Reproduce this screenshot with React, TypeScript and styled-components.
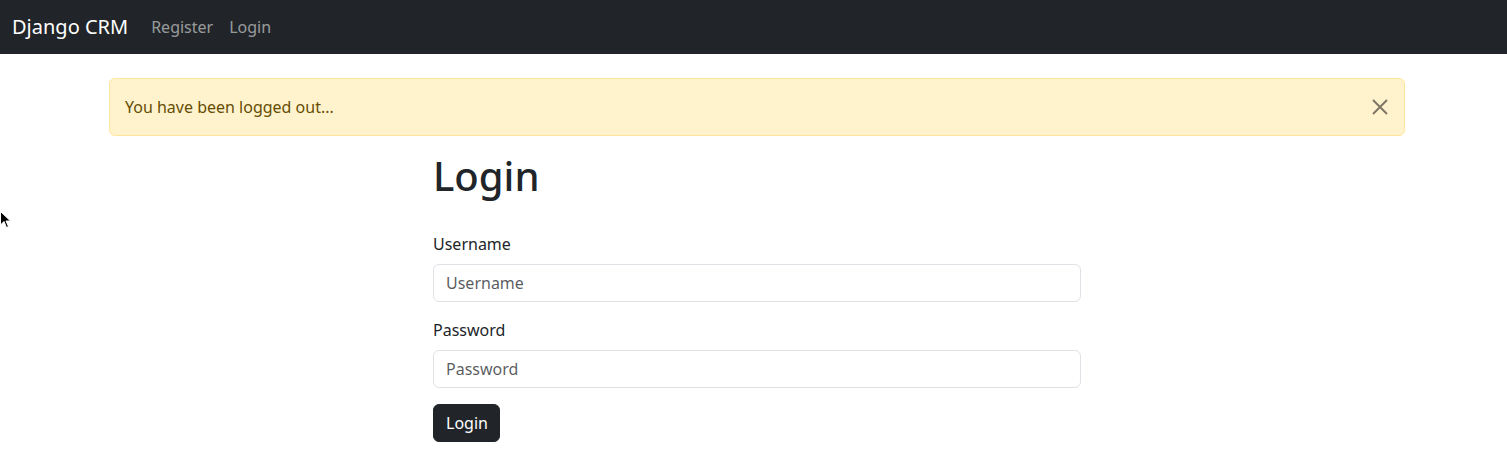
import * as React from "react";
import styled, { createGlobalStyle } from "styled-components";

const GlobalStyle = createGlobalStyle`
  * { box-sizing: border-box; }
  body {
    margin: 0;
    background: #fff;
    color: #212529;
    font-family: "Noto Sans", "Liberation Sans", sans-serif;
    font-size: 16px;
    line-height: 1.5;
  }
`;

const Navbar = styled.nav`
  display: flex;
  align-items: center;
  height: 54px;
  padding: 0 12px;
  background: #212529;
`;

const Brand = styled.a`
  font-size: 20px;
  line-height: 30px;
  color: #fff;
  text-decoration: none;
  margin-right: 15px;
`;

const NavLinks = styled.ul`
  display: flex;
  list-style: none;
  margin: 0;
  padding: 0;
`;

const NavLink = styled.a`
  display: block;
  padding: 8px;
  color: rgba(255, 255, 255, 0.55);
  text-decoration: none;
`;

const Container = styled.main`
  width: 1296px;
  margin: 24px 0 0 109px;
`;

const Alert = styled.div`
  position: relative;
  padding: 16px 48px 16px 15px;
  margin-bottom: 16px;
  background: #fff3cd;
  border: 1px solid #ffe69c;
  border-radius: 6px;
  color: #664d03;
`;

const CloseButton = styled.button`
  position: absolute;
  top: 0;
  right: 0;
  width: 48px;
  height: 56px;
  padding: 0;
  border: 0;
  background: transparent;
  display: flex;
  align-items: center;
  justify-content: center;
  opacity: 0.5;
  cursor: pointer;
`;

const FormColumn = styled.section`
  width: 50%;
  margin-left: 25%;
`;

const Title = styled.h1`
  margin: 0 0 32px;
  font-size: 40px;
  font-weight: 500;
  line-height: 1.2;
`;

const Field = styled.div`
  margin-bottom: 16px;
`;

const Label = styled.label`
  display: block;
  margin-bottom: 8px;
`;

const Input = styled.input`
  display: block;
  width: 100%;
  height: 38px;
  padding: 6px 12px;
  font: inherit;
  color: #212529;
  background: #fff;
  border: 1px solid #dee2e6;
  border-radius: 6px;
  outline: none;
  &::placeholder {
    color: rgba(33, 37, 41, 0.75);
  }
`;

const Button = styled.button`
  height: 38px;
  padding: 6px 11px 6px 12px;
  font: inherit;
  color: #fff;
  background: #212529;
  border: 1px solid #212529;
  border-radius: 6px;
  cursor: pointer;
`;

const Cursor = styled.svg`
  position: absolute;
  left: 0;
  top: 211px;
`;

export default function App() {
  return (
    <>
      <GlobalStyle />
      <Navbar>
        <Brand href="#">Django CRM</Brand>
        <NavLinks>
          <li>
            <NavLink href="#">Register</NavLink>
          </li>
          <li>
            <NavLink href="#">Login</NavLink>
          </li>
        </NavLinks>
      </Navbar>
      <Container>
        <Alert role="alert">
          You have been logged out...
          <CloseButton aria-label="Close">
            <svg width="16" height="16" viewBox="0 0 16 16">
              <path d="M1 1L15 15M15 1L1 15" stroke="#000" strokeWidth="2" />
            </svg>
          </CloseButton>
        </Alert>
        <FormColumn>
          <Title>Login</Title>
          <form onSubmit={(e) => e.preventDefault()}>
            <Field>
              <Label htmlFor="username">Username</Label>
              <Input id="username" placeholder="Username" />
            </Field>
            <Field>
              <Label htmlFor="password">Password</Label>
              <Input id="password" type="password" placeholder="Password" />
            </Field>
            <Button type="submit">Login</Button>
          </form>
        </FormColumn>
      </Container>
      <Cursor width="12" height="18" viewBox="0 0 12 18">
        <path d="M0.5 0.5L0.5 14L4 10.5L6.5 16.5L8.5 15.5L6 10L10.5 10Z" fill="#000" stroke="#fff" strokeWidth="1" />
      </Cursor>
    </>
  );
}
